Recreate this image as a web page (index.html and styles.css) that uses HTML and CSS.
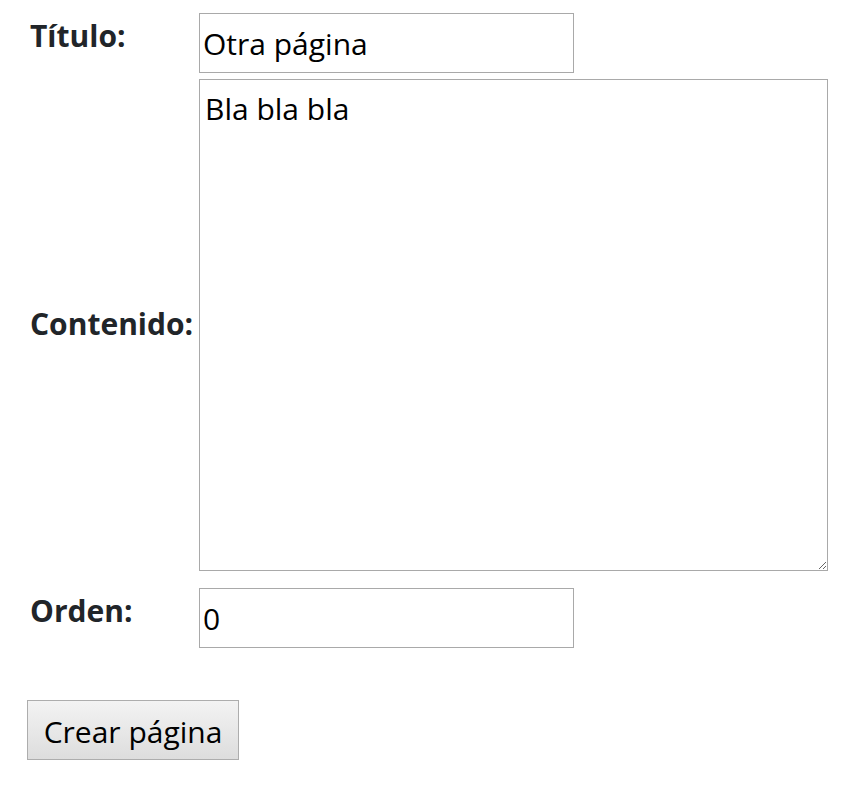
FILE: index.html
```html
<!DOCTYPE html>
<html lang="es">
<head>
<meta charset="utf-8">
<title>Crear página</title>
<link rel="stylesheet" href="styles.css">
</head>
<body>
<form class="form">
  <div class="row row-title">
    <label class="label" for="titulo">Título:</label>
    <input class="field field-short" id="titulo" type="text" value="Otra página">
  </div>
  <div class="row row-content">
    <label class="label label-mid" for="contenido">Contenido:</label>
    <textarea class="field field-area" id="contenido">Bla bla bla</textarea>
  </div>
  <div class="row row-order">
    <label class="label" for="orden">Orden:</label>
    <input class="field field-short" id="orden" type="text" value="0">
  </div>
  <div class="actions">
    <button class="button" type="button">Crear página</button>
  </div>
</form>
</body>
</html>
```
FILE: styles.css
```css
html, body {
  margin: 0;
  padding: 0;
  background: #ffffff;
}
body {
  font-family: "Open Sans", "Noto Sans", sans-serif;
  color: #212529;
}
.form {
  padding: 13px 0 0 27px;
}
.row {
  display: grid;
  grid-template-columns: 172px auto;
  align-items: start;
}
.row-title { margin-bottom: 6px; }
.row-content { margin-bottom: 17px; align-items: center; }
.label {
  font-weight: 700;
  font-size: 30px;
  padding: 3px 0 0 3px;
  line-height: 40px;
  white-space: nowrap;
}
.label-mid { padding-top: 0; margin-top: -2px; }
.field {
  font-family: "Open Sans", "Noto Sans", sans-serif;
  font-size: 30px;
  color: #000;
  border: 1px solid #a9a9a9;
  box-sizing: border-box;
  margin: 0;
  background: #fff;
  outline: none;
}
.field-short {
  width: 375px;
  height: 60px;
  padding: 0 3px;
}
.field-area {
  width: 629px;
  height: 492px;
  padding: 9px 5px;
  line-height: 40px;
  resize: both;
  display: block;
}
.actions {
  margin-top: 52px;
}
.button {
  font-family: "Open Sans", "Noto Sans", sans-serif;
  font-size: 30px;
  color: #000;
  width: 212px;
  height: 60px;
  padding: 2px 0 0;
  border: 1px solid #adadad;
  border-radius: 0;
  background: linear-gradient(#f3f3f3, #dddddd);
}
```
